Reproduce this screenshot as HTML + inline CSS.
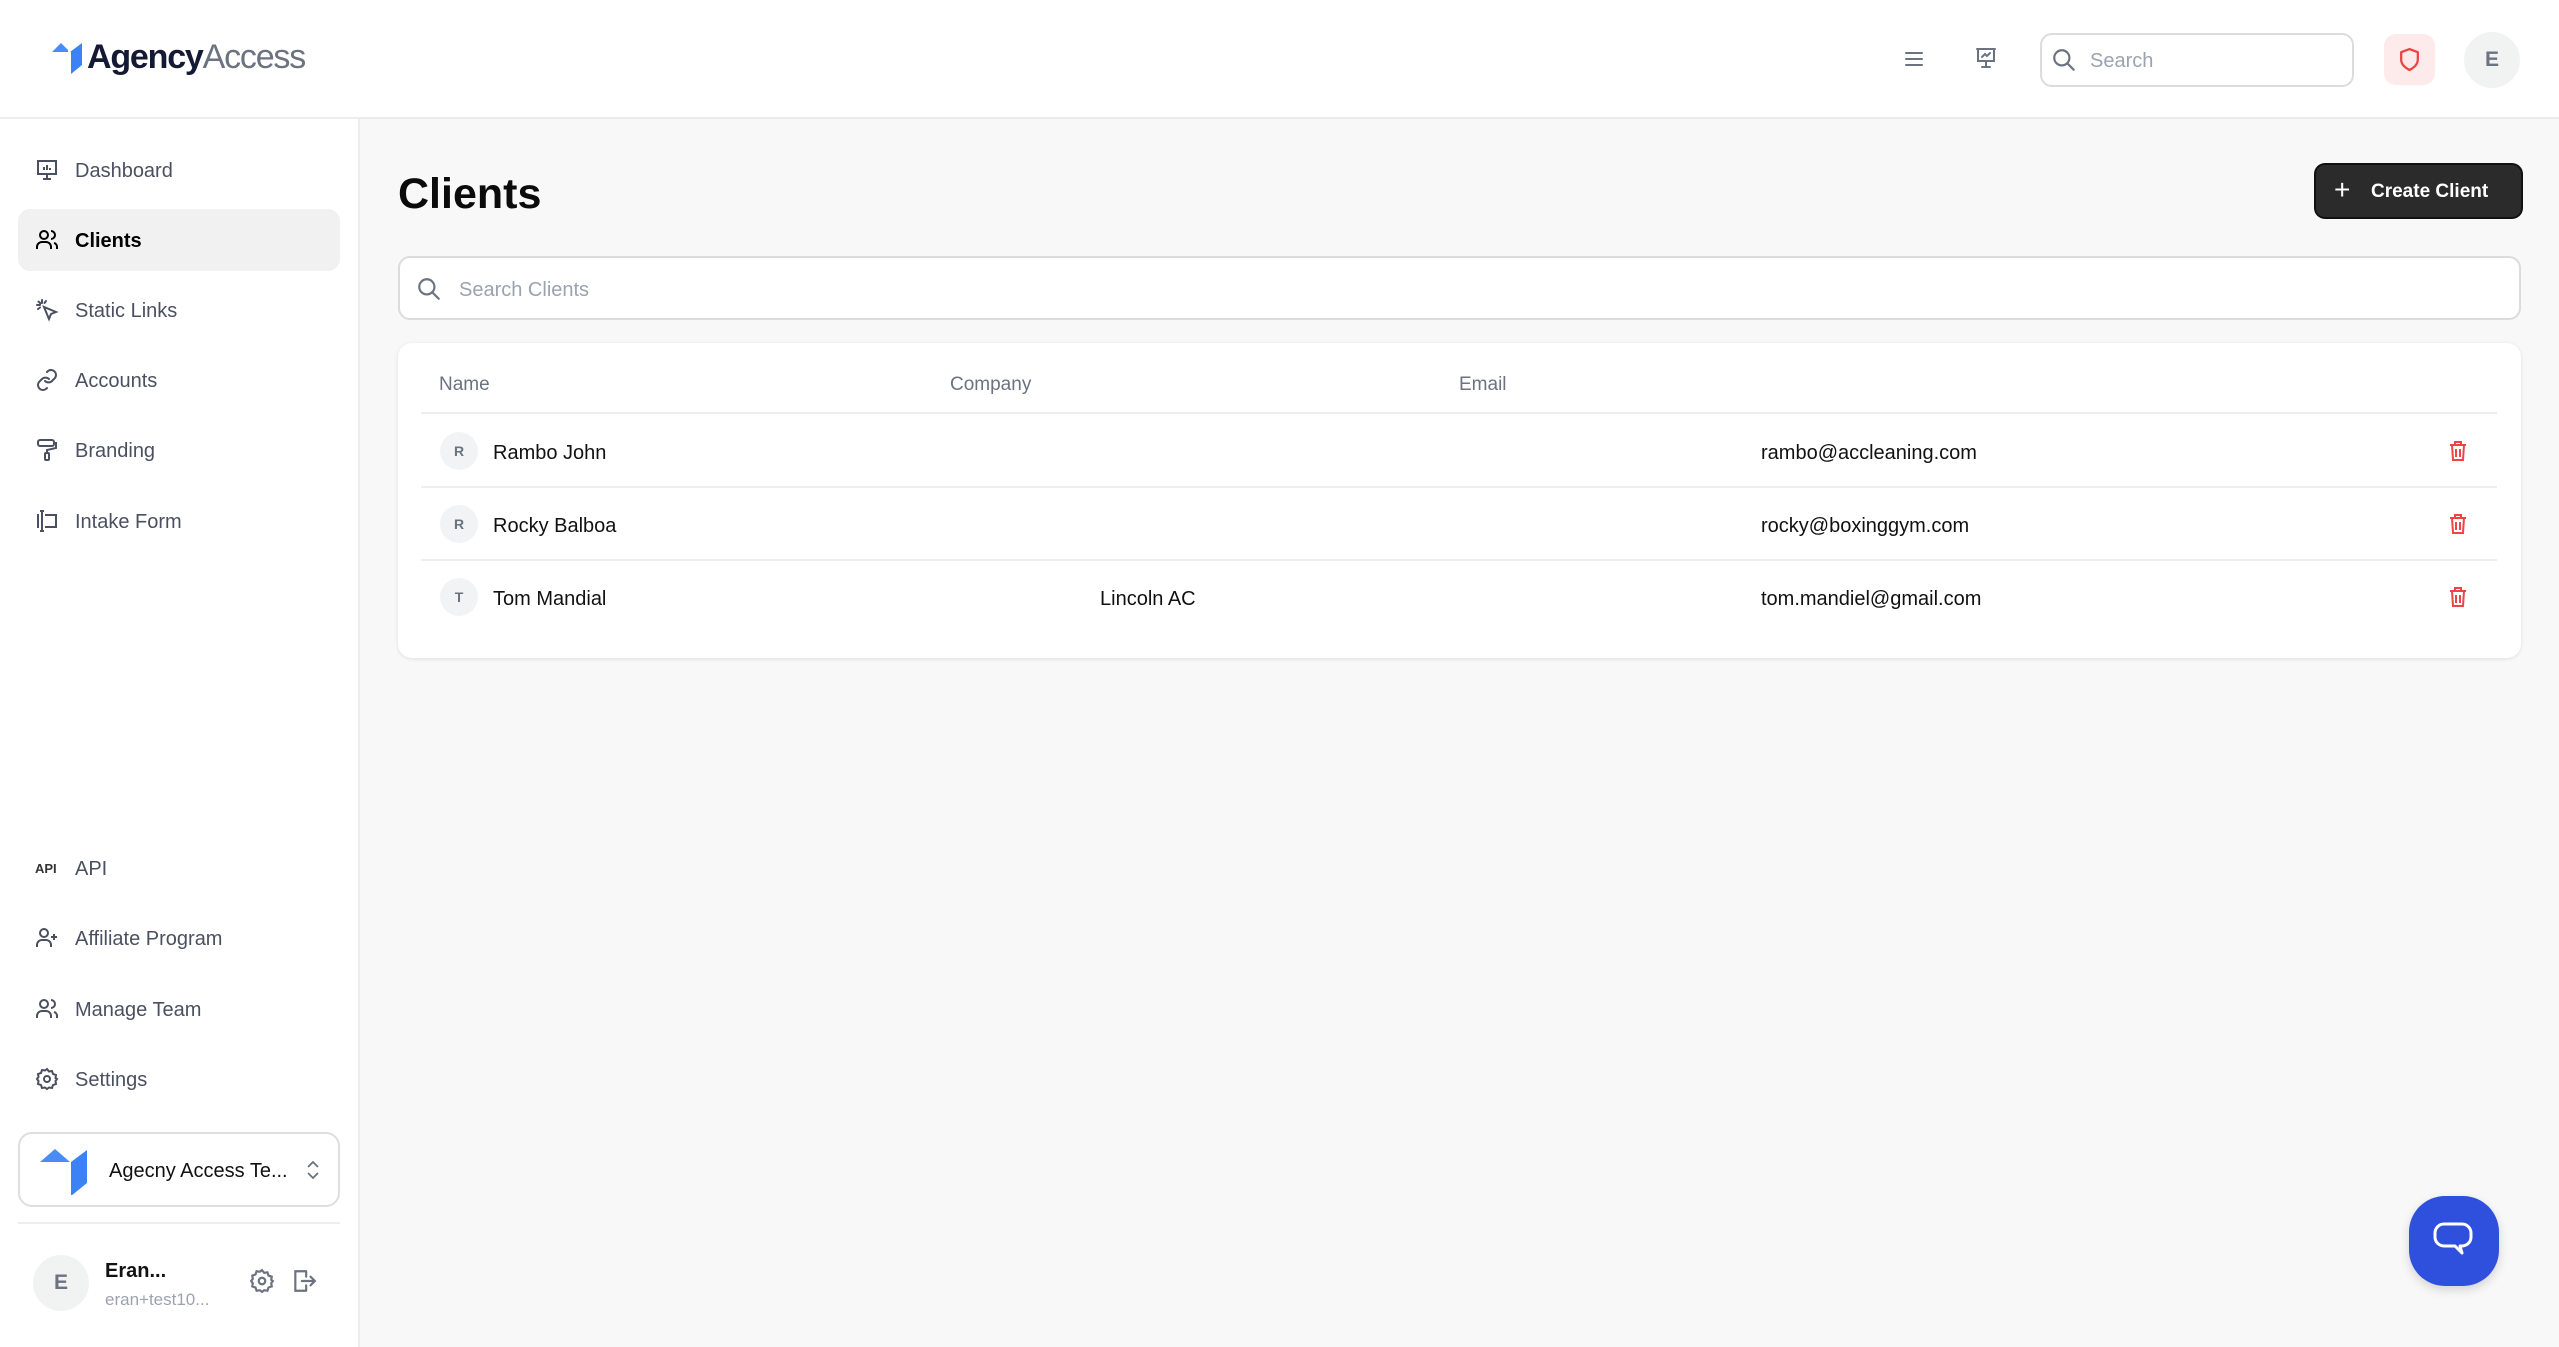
<!DOCTYPE html>
<html><head><meta charset="utf-8"><style>
*{box-sizing:border-box;margin:0;padding:0}
body{width:2559px;height:1347px;overflow:hidden;background:#f8f8f8;font-family:"Liberation Sans",sans-serif;position:relative;color:#111}
.abs{position:absolute}
.hdr{left:0;top:0;width:2559px;height:119px;background:#fff;border-bottom:2px solid #ececec}
.side{left:0;top:119px;width:360px;height:1228px;background:#fff;border-right:2px solid #ececec}
.nav{position:absolute;left:18px;width:322px;height:62px;display:flex;align-items:center;font-size:20px;color:#4b5060;border-radius:12px}
.nav svg{position:absolute;left:17px;width:24px;height:24px}
.nav span{position:absolute;left:57px;top:21px}
.nav.act{background:#f1f1f1;color:#000;font-weight:bold}
.th{position:absolute;top:374px;font-size:19px;color:#6b7280}
.row{position:absolute;left:421px;width:2076px;height:73px;font-size:20px}
.row .av{position:absolute;left:19px;top:17px;width:38px;height:38px;border-radius:50%;background:#f2f3f4;color:#6b7280;font-size:14px;font-weight:bold;display:flex;align-items:center;justify-content:center}
.row .t{position:absolute;top:27px}
.line{position:absolute;left:421px;width:2076px;height:2px;background:#eee}
</style></head><body>
<div class="abs hdr"></div>
<svg class="abs" style="left:52px;top:43px" width="31" height="31" viewBox="0 0 31 31"><polygon points="0,9 9,0 16,7 16,9" fill="#4a8cf6"/><polygon points="18,9 30,0 30,22 19,31 19,9" fill="#3b82f6"/></svg>
<div class="abs" style="left:87px;top:37px;font-size:34px;letter-spacing:-1.2px;line-height:40px"><b style="color:#141a33">Agency</b><span style="color:#6b7280">Access</span></div>
<svg class="abs" style="left:1902px;top:47px" width="24" height="24" viewBox="0 0 24 24" fill="none" stroke="#6b7280" stroke-width="2" stroke-linecap="round"><path d="M4 6h16M4 12h16M4 18h16"/></svg>
<svg class="abs" style="left:1974px;top:46px" width="24" height="24" viewBox="0 0 24 24" fill="none" stroke="#6b7280" stroke-width="2" stroke-linecap="round"><path d="M3 3h18M4 3v12h16V3M12 15v5M8 21h8M8 11l3-3 2 2 3-3"/></svg>
<div class="abs" style="left:2040px;top:33px;width:314px;height:54px;border:2px solid #dcdcdc;border-radius:12px;background:#fff"></div>
<svg class="abs" style="left:2051px;top:47px" width="26" height="26" viewBox="0 0 24 24" fill="none" stroke="#6b7280" stroke-width="2" stroke-linecap="round"><circle cx="10" cy="10" r="7"/><path d="M15 15l6 6"/></svg>
<div class="abs" style="left:2090px;top:50px;font-size:20px;color:#9ca3af">Search</div>
<div class="abs" style="left:2384px;top:34px;width:51px;height:51px;border-radius:12px;background:#fdeaea"></div>
<svg class="abs" style="left:2397px;top:47px" width="25" height="25" viewBox="0 0 24 24" fill="none" stroke="#ef4444" stroke-width="2.2" stroke-linejoin="round"><path d="M12 2l8 3v7c0 5-4 8-8 10-4-2-8-5-8-10V5z"/></svg>
<div class="abs" style="left:2464px;top:32px;width:56px;height:56px;border-radius:50%;background:#f1f2f2;color:#6b7280;font-weight:bold;font-size:21px;display:flex;align-items:center;justify-content:center">E</div>

<div class="abs side"></div>
<div class="nav" style="top:139px"><svg viewBox="0 0 24 24" fill="none" stroke="#4b5060" stroke-width="2"><path d="M2 3h20M3 3v13h18V3M12 16v4M8 21h8M9 12V9M12 12V7M15 12v-2"/></svg><span>Dashboard</span></div>
<div class="nav act" style="top:209px"><svg viewBox="0 0 24 24" fill="none" stroke="#000" stroke-width="2"><circle cx="9" cy="7" r="4"/><path d="M2 21v-2a5 5 0 015-5h4a5 5 0 015 5v2M16 3a4 4 0 010 8M22 21v-2a4 4 0 00-3-4"/></svg><span>Clients</span></div>
<div class="nav" style="top:279px"><svg viewBox="0 0 24 24" fill="none" stroke="#4b5060" stroke-width="2" stroke-linecap="round"><path d="M9 9l5 12 2-5 5-2zM7 2v3M2 7h3M3.5 3.5l2 2M11 3l-1.5 2M3 11l2-1.5"/></svg><span>Static Links</span></div>
<div class="nav" style="top:349px"><svg viewBox="0 0 24 24" fill="none" stroke="#4b5060" stroke-width="2" stroke-linecap="round"><path d="M10 13a5 5 0 007 0l3-3a5 5 0 00-7-7l-1 1M14 11a5 5 0 00-7 0l-3 3a5 5 0 007 7l1-1"/></svg><span>Accounts</span></div>
<div class="nav" style="top:419px"><svg viewBox="0 0 24 24" fill="none" stroke="#4b5060" stroke-width="2"><rect x="3" y="2" width="16" height="6" rx="2"/><path d="M19 5h2v5l-9 2v3"/><rect x="10" y="15" width="4" height="7" rx="1"/></svg><span>Branding</span></div>
<div class="nav" style="top:490px"><svg viewBox="0 0 24 24" fill="none" stroke="#4b5060" stroke-width="2"><path d="M5 2h4M5 22h4M7 2v20M10 6h11v12H10M4 6H3v12h1"/><path d="M14 12h0M17 12h0"/></svg><span>Intake Form</span></div>

<div class="nav" style="top:837px"><span style="left:17px;top:24px;font-size:13px;font-weight:bold;color:#333">API</span><span>API</span></div>
<div class="nav" style="top:907px"><svg viewBox="0 0 24 24" fill="none" stroke="#4b5060" stroke-width="2"><circle cx="9" cy="7" r="4"/><path d="M2 21v-2a5 5 0 015-5h4a5 5 0 015 5v2M19 8v6M16 11h6"/></svg><span>Affiliate Program</span></div>
<div class="nav" style="top:978px"><svg viewBox="0 0 24 24" fill="none" stroke="#4b5060" stroke-width="2"><circle cx="9" cy="7" r="4"/><path d="M2 21v-2a5 5 0 015-5h4a5 5 0 015 5v2M16 3a4 4 0 010 8M22 21v-2a4 4 0 00-3-4"/></svg><span>Manage Team</span></div>
<div class="nav" style="top:1048px"><svg viewBox="0 0 24 24" fill="none" stroke="#4b5060" stroke-width="2"><circle cx="12" cy="12" r="3"/><path d="M12 2l2 2.5 3-.5 1 3 3 1-.5 3L22 12l-1.5 2 .5 3-3 1-1 3-3-.5L12 22l-2-1.5-3 .5-1-3-3-1 .5-3L2 12l1.5-2-.5-3 3-1 1-3 3 .5z"/></svg><span>Settings</span></div>

<div class="abs" style="left:18px;top:1132px;width:322px;height:75px;border:2px solid #dedede;border-radius:14px;background:#fff"></div>
<svg class="abs" style="left:40px;top:1147px" width="48" height="48" viewBox="0 0 48 48"><polygon points="0,15 15,2 30,15" fill="#4a8cf6"/><polygon points="31,15 47,3 47,36 31,49" fill="#3b82f6"/></svg>
<div class="abs" style="left:109px;top:1160px;font-size:20px;color:#111">Agecny Access Te...</div>
<svg class="abs" style="left:305px;top:1159px" width="16" height="22" viewBox="0 0 16 22" fill="none" stroke="#6b7280" stroke-width="1.8"><path d="M3 8l5-5 5 5M3 14l5 5 5-5"/></svg>
<div class="abs" style="left:18px;top:1222px;width:322px;height:2px;background:#eee"></div>
<div class="abs" style="left:33px;top:1255px;width:56px;height:56px;border-radius:50%;background:#f1f2f2;color:#6b7280;font-weight:bold;font-size:21px;display:flex;align-items:center;justify-content:center">E</div>
<div class="abs" style="left:105px;top:1260px;font-size:20px;font-weight:bold">Eran...</div>
<div class="abs" style="left:105px;top:1290px;font-size:17px;color:#9ca3af">eran+test10...</div>
<svg class="abs" style="left:249px;top:1268px" width="26" height="26" viewBox="0 0 24 24" fill="none" stroke="#6b7280" stroke-width="2"><circle cx="12" cy="12" r="3"/><path d="M12 2l2 2.5 3-.5 1 3 3 1-.5 3L22 12l-1.5 2 .5 3-3 1-1 3-3-.5L12 22l-2-1.5-3 .5-1-3-3-1 .5-3L2 12l1.5-2-.5-3 3-1 1-3 3 .5z"/></svg>
<svg class="abs" style="left:291px;top:1268px" width="26" height="26" viewBox="0 0 24 24" fill="none" stroke="#6b7280" stroke-width="2" stroke-linecap="round"><path d="M14 3H4v18h10M14 8V3M14 21v-5M10 12h12M18 8l4 4-4 4"/></svg>

<div class="abs" style="left:398px;top:170px;font-size:43px;font-weight:bold;color:#0b0b0b">Clients</div>
<div class="abs" style="left:2316px;top:165px;width:205px;height:52px;border-radius:9px;background:#2b2b2b;box-shadow:0 0 0 2px #111;color:#fff;font-size:19px;font-weight:bold"><span style="position:absolute;left:18px;font-size:28px;font-weight:normal;top:9px">+</span><span style="position:absolute;left:55px;top:16px">Create Client</span></div>
<div class="abs" style="left:398px;top:256px;width:2123px;height:64px;border:2px solid #dcdcdc;border-radius:12px;background:#fff"></div>
<svg class="abs" style="left:416px;top:276px" width="26" height="26" viewBox="0 0 24 24" fill="none" stroke="#6b7280" stroke-width="2" stroke-linecap="round"><circle cx="10" cy="10" r="7"/><path d="M15 15l6 6"/></svg>
<div class="abs" style="left:459px;top:279px;font-size:20px;color:#9ca3af">Search Clients</div>

<div class="abs" style="left:398px;top:343px;width:2123px;height:315px;background:#fff;border-radius:14px;box-shadow:0 1px 4px rgba(0,0,0,.1)"></div>
<div class="th" style="left:439px">Name</div>
<div class="th" style="left:950px">Company</div>
<div class="th" style="left:1459px">Email</div>
<div class="line" style="top:412px"></div>
<div class="row" style="top:415px"><div class="av">R</div><div class="t" style="left:72px">Rambo John</div><div class="t" style="left:1340px">rambo@accleaning.com</div></div>
<div class="line" style="top:486px"></div>
<div class="row" style="top:488px"><div class="av">R</div><div class="t" style="left:72px">Rocky Balboa</div><div class="t" style="left:1340px">rocky@boxinggym.com</div></div>
<div class="line" style="top:559px"></div>
<div class="row" style="top:561px"><div class="av">T</div><div class="t" style="left:72px">Tom Mandial</div><div class="t" style="left:679px">Lincoln AC</div><div class="t" style="left:1340px">tom.mandiel@gmail.com</div></div>
<svg class="abs" style="left:2448px;top:440px" width="20" height="22" viewBox="0 0 20 22" fill="none" stroke="#ef4444" stroke-width="2"><path d="M2 5h16M7 5V2h6v3M4 5l1 15h10l1-15M8 9v8M12 9v8"/></svg>
<svg class="abs" style="left:2448px;top:513px" width="20" height="22" viewBox="0 0 20 22" fill="none" stroke="#ef4444" stroke-width="2"><path d="M2 5h16M7 5V2h6v3M4 5l1 15h10l1-15M8 9v8M12 9v8"/></svg>
<svg class="abs" style="left:2448px;top:586px" width="20" height="22" viewBox="0 0 20 22" fill="none" stroke="#ef4444" stroke-width="2"><path d="M2 5h16M7 5V2h6v3M4 5l1 15h10l1-15M8 9v8M12 9v8"/></svg>

<div class="abs" style="left:2409px;top:1196px;width:90px;height:90px;border-radius:36px;background:#2f50dc;box-shadow:0 4px 10px rgba(0,0,0,.15)"></div>
<svg class="abs" style="left:2432px;top:1221px" width="42" height="40" viewBox="0 0 42 40" fill="none" stroke="#fff" stroke-width="3" stroke-linejoin="round"><path d="M12 3h18a9 9 0 019 9v4a9 9 0 01-9 9h-2l2 7-7-7H12a9 9 0 01-9-9v-4a9 9 0 019-9z"/></svg>
</body></html>
